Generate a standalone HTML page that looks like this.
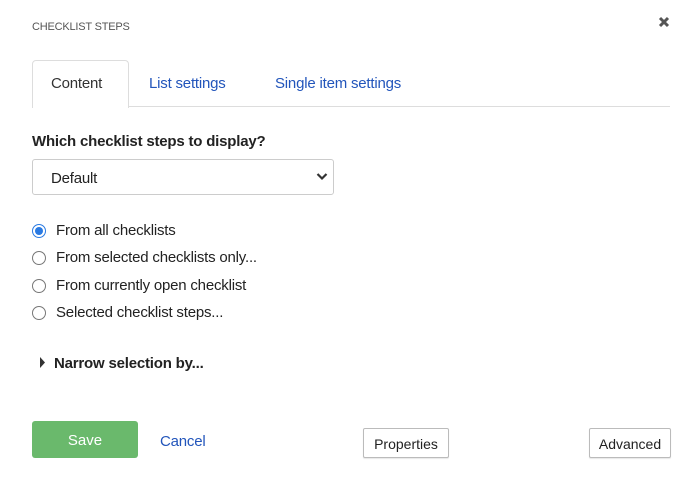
<!DOCTYPE html>
<html><head><style>
body{margin:0;width:700px;height:479px;background:#fff;font-family:"Liberation Sans",sans-serif;color:#222;position:relative;overflow:hidden}
.a{position:absolute;white-space:nowrap}
.t{font-size:15px;letter-spacing:-0.2px}
.radio{position:absolute;left:32px;width:12px;height:12px;border:1px solid #777;border-radius:50%;background:#fff}
.btn{position:absolute;border:1px solid #bbb;border-radius:2px;background:#fff;font-size:14px;text-align:center;box-shadow:0 1px 1px rgba(0,0,0,.1)}
</style></head><body>
<div class="a" style="left:32px;top:21px;font-size:11px;color:#555;letter-spacing:-0.2px">CHECKLIST STEPS</div>
<svg class="a" style="left:658px;top:16px" width="12" height="12" viewBox="0 0 12 12"><path d="M2 2L10 10M10 2L2 10" stroke="#555" stroke-width="3"/></svg>
<div class="a" style="left:32px;top:106px;width:638px;height:1px;background:#ddd"></div>
<div class="a" style="left:32px;top:60px;width:95px;height:47px;border:1px solid #ddd;border-bottom:none;border-radius:4px 4px 0 0;background:#fff"></div>
<div class="a t" style="left:51px;top:75px;color:#333">Content</div>
<div class="a t" style="left:149px;top:75px;color:#2255bb">List settings</div>
<div class="a t" style="left:275px;top:75px;color:#2255bb">Single item settings</div>
<div class="a t" style="left:32px;top:133px;font-weight:bold">Which checklist steps to display?</div>
<div class="a" style="left:32px;top:159px;width:300px;height:34px;border:1px solid #ccc;border-radius:3px"></div>
<div class="a t" style="left:51px;top:170px">Default</div>
<svg class="a" style="left:316px;top:172px" width="12" height="9" viewBox="0 0 12 9"><path d="M1.5 2L6 6.5L10.5 2" stroke="#333" stroke-width="2.2" fill="none"/></svg>
<div class="radio" style="top:224px;border-color:#2a7ae2;background:#fff"><div style="position:absolute;left:2px;top:2px;width:8px;height:8px;border-radius:50%;background:#2a7ae2"></div></div>
<div class="a t" style="left:56px;top:222px">From all checklists</div>
<div class="radio" style="top:251px"></div>
<div class="a t" style="left:56px;top:249px">From selected checklists only...</div>
<div class="radio" style="top:279px"></div>
<div class="a t" style="left:56px;top:277px">From currently open checklist</div>
<div class="radio" style="top:306px"></div>
<div class="a t" style="left:56px;top:304px">Selected checklist steps...</div>
<svg class="a" style="left:40px;top:357px" width="6" height="11"><path d="M0 0L5 5.5L0 11Z" fill="#333"/></svg>
<div class="a t" style="left:54px;top:355px;font-weight:bold">Narrow selection by...</div>
<div class="a" style="left:32px;top:421px;width:106px;height:37px;background:#6ab96c;border-radius:3px;color:#fff;font-size:15px;text-align:center;line-height:39px">Save</div>
<div class="a t" style="left:160px;top:433px;color:#2255bb">Cancel</div>
<div class="btn" style="left:363px;top:428px;width:84px;height:28px;line-height:30px">Properties</div>
<div class="btn" style="left:589px;top:428px;width:80px;height:28px;line-height:30px">Advanced</div>
</body></html>
